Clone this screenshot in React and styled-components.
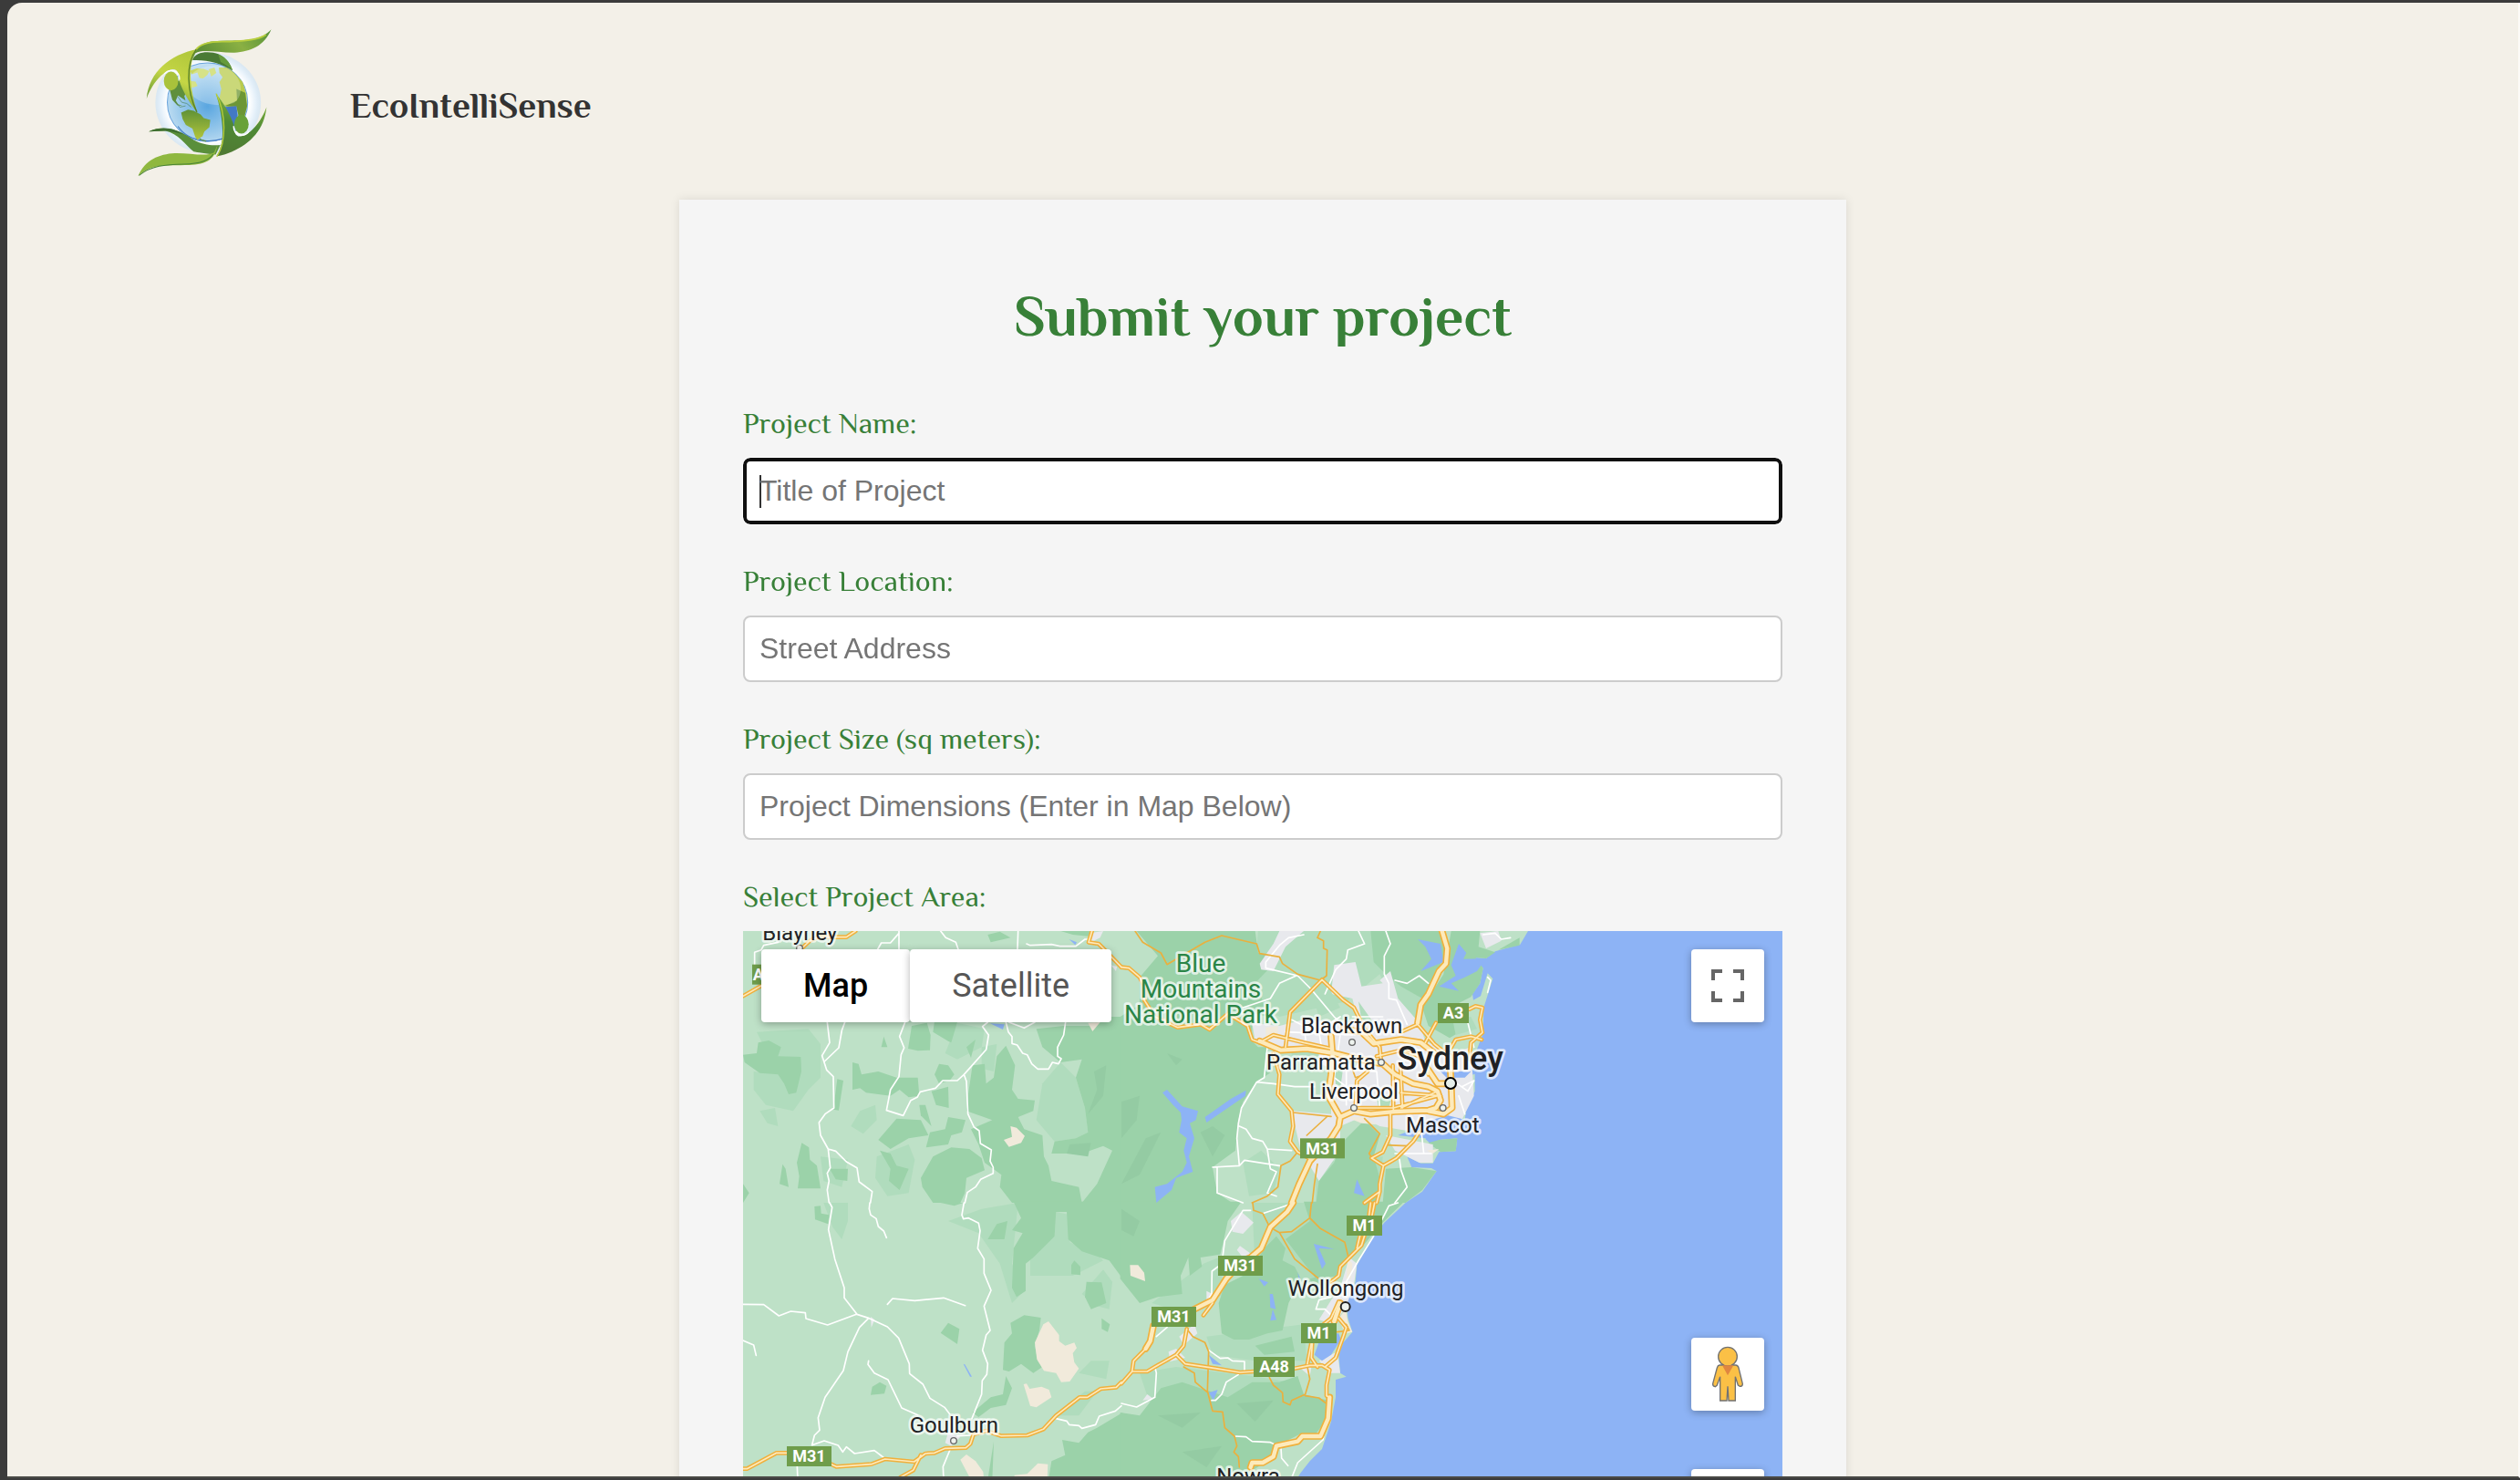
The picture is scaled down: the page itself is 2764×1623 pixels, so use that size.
import React from "react"
import styled, { createGlobalStyle } from "styled-components"
import { Plus, Minus } from "lucide-react"

const GlobalStyle = createGlobalStyle`
  * {
    box-sizing: border-box;
  }
  body {
    margin: 0;
    background: #3b3b3b;
    font-family: Philosopher, "Liberation Serif", serif;
  }
`

const Frame = styled.div`
  display: flex;
  height: 100vh;
  padding: 3px 0 2px 8px;
  background: #3b3b3b;
`

const Page = styled.div`
  flex: 1;
  overflow: hidden;
  background: #f3f0e8;
  border-right: 2px solid #fcfbf7;
  border-bottom: 2px solid #4a4a46;
  border-top-left-radius: 16px;
`

const Header = styled.header`
  display: flex;
  align-items: center;
  gap: 82px;
  padding: 27px 139px 22px;

  svg {
    display: block;
    width: 155px;
    height: 167px;
  }
`

const Brand = styled.div`
  padding-top: 4px;
  color: #333;
  font-size: 39px;
  font-weight: 700;
  line-height: 48px;
`

const Card = styled.main`
  max-width: 1280px;
  margin: 0 auto;
  padding: 88px 70px 70px;
  background: #f5f5f5;
  box-shadow: 0 0 10px rgba(0, 0, 0, 0.1);
`

const Title = styled.h1`
  margin: 0 0 57px;
  color: #388038;
  font-size: 62px;
  line-height: 80px;
  text-align: center;
`

const Form = styled.form`
  display: flex;
  flex-direction: column;
  gap: 42px;
`

const Field = styled.div`
  display: flex;
  flex-direction: column;
  gap: 18px;
`

const Label = styled.label`
  color: #388038;
  font-size: 32px;
  line-height: 40px;
`

const Input = styled.input`
  width: 100%;
  height: 73px;
  padding: 0 16px;
  border: 2px solid #ccc;
  border-radius: 8px;
  background: #fff;
  color: #111;
  font-family: Arial, "Liberation Sans", sans-serif;
  font-size: 32px;

  &::placeholder {
    color: #757575;
    opacity: 1;
  }

  &:focus {
    padding: 0 14px;
    border: 4px solid #101010;
    outline: 1px solid #fff;
    caret-color: transparent;
  }

  /* steady caret while the field is still empty */
  &:focus:placeholder-shown {
    background: linear-gradient(#333, #333) 14px center / 2px 36px no-repeat #fff;
  }
`

const MapBox = styled.div`
  position: relative;
  height: 800px;
  overflow: hidden;
  background: #8db3f5;
  font-family: Roboto, sans-serif;
`

const MapCanvas = styled.svg`
  display: block;
  width: 100%;
  height: 100%;

  .line {
    fill: none;
    stroke-linejoin: round;
    stroke-linecap: round;
  }
`

const MapTypes = styled.div`
  position: absolute;
  top: 20px;
  left: 20px;
  display: flex;
`

const MapButton = styled.button`
  height: 80px;
  padding: ${(props) => (props.$icon ? "0" : "0 46px")};
  width: ${(props) => (props.$icon ? "80px" : "auto")};
  border: 0;
  border-radius: 4px;
  background: #fff;
  box-shadow: 0 2px 8px rgba(0, 0, 0, 0.3);
  color: ${(props) => (props.$active ? "#000" : "#565656")};
  font-family: Roboto, sans-serif;
  font-size: 36px;
  font-weight: ${(props) => (props.$active ? 500 : 400)};

  svg {
    display: block;
    margin: 0 auto;
  }
`

const TopRight = styled.div`
  position: absolute;
  top: 20px;
  right: 20px;
`

const BottomRight = styled.div`
  position: absolute;
  right: 20px;
  bottom: 48px;
  display: flex;
  flex-direction: column;
  gap: 64px;
`

const ZoomButtons = styled.div`
  display: flex;
  flex-direction: column;
  gap: 2px;
`

const figure =
  "M250,132 C165,150 98,205 90,294 C108,245 140,205 172,198 C190,196 194,215 194,235 C205,270 228,310 252,340 C236,290 222,215 236,165 C240,148 246,138 250,132Z"
const ribbon =
  "M235,168 C240,125 268,105 325,104 C400,102 450,108 487,67 C465,122 420,140 370,143 C320,144 270,130 245,145Z"

const Logo = () => (
  <svg viewBox="50 60 450 500" preserveAspectRatio="none" role="img" aria-label="EcoIntelliSense logo">
    <defs>
      <radialGradient id="halo">
        <stop offset="0.78" stopColor="#fff" />
        <stop offset="0.9" stopColor="#e6f1fa" />
        <stop offset="1" stopColor="#cfe4f6" stopOpacity="0.7" />
      </radialGradient>
      <radialGradient id="sea" cx="0.5" cy="0.55" r="0.55">
        <stop offset="0" stopColor="#5aa6e0" />
        <stop offset="0.55" stopColor="#93c6ea" />
        <stop offset="1" stopColor="#c6e1f3" />
      </radialGradient>
      <linearGradient id="lime" x1="0.6" y1="0" x2="0.2" y2="1">
        <stop offset="0" stopColor="#b3c93c" />
        <stop offset="0.4" stopColor="#c5d645" />
        <stop offset="1" stopColor="#4f8a32" />
      </linearGradient>
      <linearGradient id="leaf" x1="0" y1="0.3" x2="1" y2="0">
        <stop offset="0" stopColor="#5e8f35" />
        <stop offset="0.5" stopColor="#8ab043" />
        <stop offset="1" stopColor="#55913a" />
      </linearGradient>
      <linearGradient id="moss" x1="0.6" y1="0" x2="0.4" y2="1">
        <stop offset="0" stopColor="#4f7a33" />
        <stop offset="0.5" stopColor="#4f8a35" />
        <stop offset="1" stopColor="#8ebb3f" />
      </linearGradient>
      <linearGradient id="land" x1="0" y1="0" x2="0" y2="1">
        <stop offset="0" stopColor="#5f9136" />
        <stop offset="1" stopColor="#b4c63b" />
      </linearGradient>
    </defs>
    <ellipse cx="286" cy="308" rx="168" ry="166" fill="url(#halo)" />
    <ellipse cx="284" cy="306" rx="128" ry="129" fill="url(#sea)" stroke="#6aa4dc" strokeWidth="3" />
    <path d="M190,385 C225,440 320,450 372,400" fill="none" stroke="#3f78c2" strokeWidth="3" />
    <path d="M163,262 L190,235 213,240 222,268 210,285 214,300 202,292 190,284 183,300 190,312 205,318 188,316 172,298Z" fill="#5f8f3c" />
    <path d="M190,288 L202,306 218,310 232,322 M180,302 L196,322 214,318" fill="none" stroke="#4f8560" strokeWidth="2" />
    <path d="M200,340 L222,330 240,334 262,346 272,358 293,364 290,388 274,402 268,418 258,424 252,430 245,420 236,392 215,380 205,362Z" fill="url(#land)" />
    <path d="M258,424 L266,430 280,434" fill="none" stroke="#5d9040" strokeWidth="3" />
    <path d="M228,202 L250,195 272,196 290,204 284,216 270,228 258,226 252,208 234,214Z M230,236 L246,238 252,252 236,258 228,250Z M288,198 L306,192 312,210 296,222Z" fill="#c9d860" />
    <path d="M320,192 L345,192 368,208 396,240 408,280 410,318 402,352 384,356 376,320 350,322 330,312 322,292 328,262 322,240 332,224 322,210Z" fill="#b9cb4d" />
    <path d="M376,262 L404,275 410,318 402,352 384,356 376,320 340,318 378,300Z" fill="#6c9635" />
    <path d="M334,322 L376,318 380,350 372,380 366,404 350,398 342,360Z" fill="#4379c4" />
    <path d="M222,230 C240,190 300,175 345,195 C400,222 400,285 368,308 C320,325 250,312 226,272Z" fill="#fff" opacity="0.25" />
    <path d="M236,168 C245,138 290,137 320,148 C346,160 358,182 364,202 C330,178 280,165 236,168Z" fill="#4a7a35" />
    <path d="M318,148 C345,158 358,182 364,202 C350,188 338,180 326,174Z" fill="#659b3c" />
    <path d={ribbon} fill="url(#leaf)" />
    <path d="M246,135 C262,110 300,106 340,107 C400,106 446,102 470,84" fill="none" stroke="#b8ce3e" strokeWidth="5" />
    <path d={figure} fill="url(#lime)" />
    <path d="M248,132 C214,180 218,270 250,338" fill="none" stroke="#587f2b" strokeWidth="4" />
    <path d="M146,214 C160,194 195,198 195,232" fill="none" stroke="#fff" strokeWidth="4" />
    <ellipse cx="168" cy="236" rx="23" ry="31" fill="#a9c23b" />
    <path d="M97,402 C150,378 200,400 240,430 C265,445 300,450 325,446 L310,478 C280,475 250,470 240,468 C215,448 190,408 150,400Z" fill="#5a8f3b" />
    <path d="M97,402 C140,382 180,392 210,412 C185,405 160,400 145,400Z" fill="#3f6f31" />
    <g transform="rotate(180 275 308)">
      <path d={ribbon} fill="#8fb83f" />
      <path d="M248,140 C262,116 300,108 340,107 C400,106 446,102 484,70" fill="none" stroke="#4a8436" strokeWidth="3" />
    </g>
    <g transform="rotate(180 281 308)">
      <path d={figure} fill="url(#moss)" />
      <path d="M248,132 C218,180 218,270 250,338" fill="none" stroke="#b8ce3e" strokeWidth="4" />
      <path d="M146,214 C160,194 195,198 195,232" fill="none" stroke="#fff" strokeWidth="4" />
      <ellipse cx="170" cy="238" rx="23" ry="31" fill="#68a138" />
    </g>
  </svg>
)

// Coast outline, drawn in the frame of the Sydney tile.
const coast =
  "-1245,18 1338,18 1312,62 1230,85 1200,108 1160,105 1190,140 1180,190 1155,225 1158,245 1182,232 1205,157 1222,175 1192,270 1190,355 1165,420 1130,432 1140,470 1090,492 1120,502 1163,488 1163,545 1135,600 1130,640 1080,680 1010,688 1000,702 1030,730 1045,705 1105,700 1100,742 1045,745 1025,782 985,782 940,760 955,795 1020,798 1037,808 990,875 935,912 865,977 830,1022 775,1117 770,1172 742,1240 745,1290 760,1337 730,1372 715,1412 720,1472 740,1484 705,1494 705,1552 690,1632 660,1722 620,1762 590,1800 575,1824 500,2000 450,2700 -1245,2700"

// The map is kept as four tiles, each with its own origin.
const tiles = [
  {
    x: -15,
    y: -18,
    light: [
      "60,350 230,340 270,390 270,500 230,540 180,610 90,590 50,540 50,480 130,490",
      "370,660 400,610 450,590 455,640 410,685",
      "680,420 720,320 810,340 800,400 720,440",
      "270,760 360,770 340,860 280,840",
      "455,760 560,720 580,770 560,880 490,890 450,830",
      "800,400 850,390 840,480 800,470",
      "1000,520 1060,450 1110,500 1140,600 1150,680 1110,700 1040,710 980,640",
      "70,610 120,600 130,660 95,650",
    ],
    forest: [
      "15,425 60,420 65,385 100,378 140,400 130,430 205,432 207,480 190,550 165,555 150,520 130,490 70,485 20,450",
      "325,505 345,510 330,608 312,605",
      "375,450 395,455 405,490 460,480 520,500 590,500 595,560 560,565 530,540 500,560 420,550 400,535 375,540",
      "470,400 478,365 490,400",
      "558,405 570,330 620,320 632,360 630,410 590,412",
      "645,315 720,318 700,385 690,380 640,350",
      "750,400 780,375 765,435",
      "645,490 660,455 690,460 710,490 695,510 660,520",
      "635,545 690,530 692,600 650,590",
      "595,590 615,590 635,660 600,625",
      "460,705 520,635 600,640 625,690 560,700 500,735",
      "617,730 630,680 680,670 690,630 747,640 735,680 700,690 690,720",
      "600,830 640,760 700,730 760,735 800,765 810,805 750,830 745,880 730,912 640,912 605,860",
      "465,740 500,750 520,790 560,800 530,870 495,840 500,800",
      "192,780 208,715 232,730 235,770 258,790 270,865 195,865 200,825",
      "300,800 360,800 358,840 320,835",
      "145,785 155,800 165,860 135,850",
      "15,850 35,880 15,912",
      "770,460 810,455 815,520 840,500 850,430 880,395 910,460 900,540 920,570 975,575 970,610 920,630 940,670 1000,690 1005,760 1020,790 1030,840 1120,860 1130,912 900,912 860,860 865,820 810,780 790,720 765,670 835,640 750,610 755,560",
      "980,340 1070,330 1160,330 1200,300 1264,300 1264,912 1130,912 1180,850 1230,740 1200,725 1130,750 1030,750 1040,710 1110,700 1150,680 1140,600 1110,500 1130,440 1060,450 1000,400",
      "1060,18 1160,18 1150,35 1100,30",
      "820,30 860,20 895,40 830,55",
    ],
    shade: [
      "1170,480 1210,460 1200,560 1150,620 1180,540",
      "1090,720 1160,715 1150,760 1080,750",
    ],
    urban: ["1155,25 1200,18 1190,40 1160,55", "1225,130 1245,135 1242,150"],
    sand: ["873,705 900,695 895,660 915,665 942,692 930,715 890,728", "1150,320 1190,318 1165,348"],
    water: ["828,322 875,325 870,342", "1088,45 1113,55 1108,64"],
    white:
      "M292,318 300,385 275,428 290,475 312,497 314,600 285,620 265,648 270,690 295,735 302,797 292,815 298,840 292,870 298,912 M350,318 340,345 330,402 283,447 M295,735 320,742 355,777 390,797 397,843 440,875 434,912 M548,318 530,365 545,402 535,425 528,497 500,540 487,608 542,625 567,575 588,565 598,547 648,535 672,510 720,510 742,490 815,408 823,360 803,332 820,318 M742,490 750,512 755,620 775,663 792,675 796,717 832,738 828,775 838,795 838,815 797,835 780,860 753,878 745,912 M880,318 888,350 900,365 900,388 917,393 935,420 950,425 965,455 985,472 1020,472 1033,450 1053,455 1062,438 1050,430 1050,400 1070,360 1076,318 M890,318 940,337 975,318 M458,78 470,57 500,57 528,25 M528,18 528,78 M665,18 682,40 715,55 723,78 M920,18 918,78 M948,60 960,65 1030,62 1058,68 1110,68 1140,45 1150,45 M53,135 53,88 75,80 83,65 130,55",
    thin: "",
    medium: "M205,78 235,50 260,38 355,38 385,18 M15,232 75,198 M1163,18 1152,55 1185,60 1200,75 1260,137",
    wide: "",
  },
  {
    x: 1245,
    y: -18,
    light: [
      "450,18 820,18 850,160 740,250 520,300 440,260 440,120",
      "820,100 990,130 980,320 900,260",
      "640,780 860,760 850,912 640,912",
      "400,780 460,740 520,800 500,880 420,890",
    ],
    forest: [
      "50,18 440,18 450,90 520,105 440,190 450,270 430,300 430,380 450,400 480,400 495,480 440,520 400,580 385,640 375,740 300,795 315,880 370,916 -4,916 -4,300 60,260 60,170 120,100",
      "820,18 1050,18 1070,80 1040,150 990,240 920,200 870,160 830,120",
      "1085,18 1180,18 1175,70 1230,88 1200,108 1165,105 1190,140 1180,190 1150,235 1100,260 1130,340 1080,370 1010,330 990,270 1060,160",
      "870,800 955,795 1037,808 990,870 935,912 860,912",
      "720,720 800,640 850,690 830,760 850,830 840,916 640,916 650,840 700,780",
      "1010,715 1045,705 1105,700 1100,742 1050,745",
      "720,170 735,135 755,150 745,190",
      "1240,80 1310,40 1310,65",
      "430,240 460,235 480,300 440,290",
    ],
    shade: [
      "0,580 60,560 50,640 0,700",
      "0,850 80,700 130,680 60,820",
      "260,680 300,660 340,690 300,760",
      "150,420 200,440 180,460",
    ],
    urban: [
      "455,125 500,60 520,18 600,18 540,70 500,150 460,145",
      "600,310 780,320 760,240 690,225 700,130 770,120 790,200 860,190 850,180 885,150 910,240 980,320 1000,380 1090,420 1150,400 1160,560 1120,640 1080,640 1030,690 850,660 790,630 720,660 720,740 650,840 590,740 560,610 690,620 690,470 530,400 440,380 430,320 520,330",
      "1180,25 1240,18 1250,50 1200,75",
      "560,610 690,625 660,700 600,720",
      "870,690 1025,720 1025,780 980,780 900,740",
    ],
    sand: ["475,335 515,330 515,375 475,370", "740,630 800,630 840,655 790,650", "1005,740 1045,735 1025,750"],
    park: [
      "620,200 680,200 720,270 650,300",
      "700,460 730,465 720,540 705,520",
      "560,410 650,420 650,470 560,480",
      "780,250 830,320 790,310",
      "1090,310 1150,300 1170,340 1100,360",
      "840,560 890,560 880,600 845,595",
      "740,430 780,450 760,480",
    ],
    water: [
      "135,550 150,540 200,595 252,610 245,640 225,650 240,700 222,760 235,810 180,830 165,870 115,912 110,860 150,850 200,810 215,780 205,740 215,700 190,680 198,640 195,615 170,590",
      "275,630 360,570 410,542 408,560 280,648",
      "975,45 1050,60 1060,120 985,150 1020,110 1000,70",
      "1110,60 1135,90 1125,110 1200,108 1170,150 1130,170 1085,190 1110,215 1045,200 1100,165 1085,130",
      "775,835 800,890 765,880",
      "1075,625 1135,640 1090,680 1000,700 910,690 950,675 980,650",
      "1030,460 1070,480 1150,480 1130,500 1070,500",
    ],
    white:
      "M600,30 550,40 520,65 475,120 475,140 580,165 625,210 700,300 730,330 M780,18 800,60 745,80 740,110 705,145 670,225 M870,18 885,60 865,100 865,160 880,190 880,240 905,245 940,325 M445,515 500,520 570,530 635,530 M480,400 470,500 445,515 395,600 385,650 380,700 388,790 300,795 315,795 315,880 400,912 M388,660 410,670 430,700 465,710 480,735 560,740 M388,790 405,772 520,790 M480,735 490,800 510,810 480,880 510,890 M540,350 760,360 M600,330 610,400 M650,350 660,410 M560,310 640,350 720,300 M740,430 740,590 M700,500 780,560 M700,560 790,540 M700,470 840,480 M720,360 700,500 M760,300 860,300 M840,480 850,600 M915,770 920,805 940,860 900,912 M900,180 940,190 980,165 1010,190 M1140,320 1160,400 M1105,520 1140,545 1160,510 1120,530 M900,750 1020,750 M985,660 995,750 M575,165 520,190 490,240 400,270 M1190,30 1230,25 1250,45 1280,40 M1205,170 1215,180 1205,220 M1110,560 1130,620",
    thin:
      "M45,18 70,55 130,90 150,128 275,55 330,33 445,60 455,92 520,103 530,125 580,160 655,180 M655,18 645,40 665,50 665,75 677,80 675,165 655,180 M565,615 690,628 M675,630 610,690 M580,745 555,775 525,790 515,860 480,890 430,912 M645,785 635,850 628,912 M800,635 850,685 815,750 825,765 M870,722 945,725 M750,445 770,500 800,490",
    medium:
      "M0,137 25,140 60,170 75,200 75,245 110,300 185,335 260,325 290,342 350,290 415,330 430,375 455,385 500,360 600,385 690,405 M540,400 555,285 660,178 730,245 765,270 800,340 850,400 855,450 M500,420 520,490 515,555 560,610 565,660 555,710 580,745 625,770 M1145,275 1165,265 1188,270 1180,310 1188,352 1150,385 1145,440 M1080,410 1100,375 1150,365 1185,375 M1000,385 1035,320 M975,325 1030,390 1080,430 M885,620 885,690 860,745 823,765 862,790 850,850 850,875 800,912 M850,875 840,912 M862,790 905,765 960,710 980,680 M893,460 895,610 M918,460 925,600 M770,600 775,510 810,480 M780,600 895,600 1040,560 M920,600 1040,545 M920,550 1050,560 M840,430 920,410 980,430 1010,490 M975,325 920,350",
    wide:
      "M455,380 525,410 610,405 700,420 780,440 860,455 900,490 960,520 1010,530 1040,545 1050,575 1035,600 1010,608 900,612 820,620 765,610 720,630 715,660 690,700 620,775 585,850 560,912 M690,365 695,430 690,490 680,560 720,630 M1055,18 1072,75 1068,125 1045,150 1010,225 985,260 975,320 M730,340 790,350 830,388 920,375 985,385 1030,420 M1000,460 1040,520 1080,520 M1080,430 1085,520 1088,600 1060,620 1010,610",
  },
  {
    x: -15,
    y: 894,
    light: [
      "280,0 360,0 360,60 340,120 310,80",
      "690,60 800,20 920,0 900,200 940,290 900,330 860,200 790,100",
      "960,160 1040,110 1045,30 1090,40 1090,130 1180,170 1200,190 1100,240 960,240",
      "1130,300 1200,220 1230,260 1220,350 1180,340",
      "1040,700 1140,620 1180,620 1120,700",
      "1120,560 1160,520 1220,520 1210,580",
    ],
    forest: [
      "250,12 270,10 272,35 298,40 295,70 252,55",
      "665,428 690,395 727,415 720,465",
      "435,632 440,605 465,590 487,602 480,628",
      "870,550 875,460 900,430 895,395 940,370 995,378 990,420 975,470 985,520 1000,540 970,560 930,530 890,555",
      "880,570 900,610 880,665 830,675 790,705 770,690 830,640 870,630",
      "905,-4 1264,-4 1264,250 1220,190 1130,160 1085,120 1080,30 1045,30 1040,110 970,180 945,200 945,290 915,310 900,280 905,150 935,100 900,90 930,50",
      "1145,260 1195,262 1210,330 1160,350 1140,310",
      "1195,380 1222,400 1215,425 1195,415",
      "1065,780 1120,790 1150,755 1180,740 1264,690 1264,912 1020,912 1030,850 1075,830",
      "820,912 840,785 835,912",
      "820,120 850,70 885,60 875,120",
      "1095,205 1105,190 1125,210 1125,238 1095,235",
      "665,0 740,0 710,10",
    ],
    shade: [],
    urban: ["435,375 448,385 437,410", "680,790 690,755 730,770 700,800"],
    sand: [
      "975,460 1003,400 1020,390 1055,435 1055,455 1075,470 1105,460 1113,478 1100,495 1105,525 1120,545 1090,588 1062,590 1045,560 1005,553 982,515",
      "938,597 948,595 958,612 997,605 1022,615 1030,640 980,673 960,668",
      "730,845 750,828 780,850 805,885 808,912 765,912",
      "908,896 950,892 985,857 1018,860 1016,912 908,912",
    ],
    water: ["740,530 745,532 768,572 762,572"],
    white:
      "M300,0 308,15 296,88 317,185 348,280 348,313 390,367 430,380 490,408 527,445 562,530 563,562 607,597 630,643 678,673 695,695 M432,0 430,20 435,40 453,52 460,78 478,93 487,115 M742,0 735,40 740,53 757,50 790,67 795,92 787,150 808,185 808,232 831,288 808,340 828,420 815,435 803,485 820,530 817,565 802,585 800,630 768,710 M490,334 507,315 580,322 675,313 746,338 M15,334 83,335 133,372 172,357 220,362 222,381 293,402 388,367 M428,380 398,410 360,490 345,552 285,640 262,707 267,748 250,765 242,797 282,783 328,798 343,820 355,803 382,825 447,815 480,840 M15,453 50,468 58,502 M428,520 426,532 447,560 492,582 537,675 590,698 M193,867 195,912 M697,810 673,868 675,912 M720,767 765,765 M1045,710 1080,718 1088,730 1120,733 1130,742 1175,730 1187,702 1240,685 1260,668",
    thin: "",
    medium:
      "M15,875 28,875 125,823 160,823 M305,860 322,868 437,860 482,843 578,852 615,825 645,823 680,808 748,806 763,793 773,762 815,750 850,762 865,767 950,765 1003,745 1045,700 1122,640 1148,640 1192,612 1243,607 1260,590 M533,903 575,880 600,830",
    wide: "",
  },
  {
    x: 1245,
    y: 894,
    light: [
      "430,0 620,0 720,130 640,250 540,300 440,220",
      "270,200 320,180 340,300 200,360 100,330",
      "280,440 600,400 610,520 440,520 300,500",
      "60,560 180,540 430,570 560,590 600,640 100,680",
    ],
    forest: [
      "-4,-4 395,-4 350,60 335,130 325,170 260,180 265,210 225,240 220,180 195,240 200,300 120,310 60,330 -4,250",
      "340,270 400,240 440,200 470,150 510,110 540,150 530,190 570,210 590,250 550,330 530,420 480,430 420,450 370,450 330,430 320,330",
      "600,-4 930,-4 860,65 830,100 770,170 730,200 720,240 640,250 540,120 620,60",
      "-4,690 60,700 130,610 200,590 350,640 430,590 520,590 580,570 600,630 680,650 670,720 640,760 590,760 510,800 480,850 400,900 400,912 -4,912",
      "620,250 660,240 680,280 640,300",
      "440,470 560,440 570,490 470,500",
    ],
    shade: ["120,700 260,690 200,740", "200,820 330,800 280,870", "380,660 500,650 440,720", "0,20 60,60 40,110 0,90"],
    urban: [
      "360,60 395,30 435,65 400,102 365,95",
      "380,155 390,142 430,170 400,180",
      "190,440 240,400 250,430 205,468",
      "690,320 720,280 750,180 775,200 765,270 740,340 700,400 650,385",
      "650,520 710,490 720,560 690,560",
      "155,490 180,480 210,510 160,522",
      "590,545 625,540 620,570",
      "70,650 85,630 105,645",
      "280,290 300,300 300,320 280,320",
    ],
    sand: ["28,205 55,205 75,230 78,258 30,240", "738,350 745,390 760,425 735,430 715,380", "745,180 760,200 755,250 740,250"],
    water: [
      "633,135 700,152 650,150 672,200 660,218",
      "452,250 483,262 470,275",
      "488,300 498,300 508,350 490,345",
      "498,350 510,385 490,388",
      "635,500 660,430 715,430 722,450 690,500 660,520",
      "287,500 330,535 300,530",
      "288,625 317,615 303,650",
      "580,228 590,255 583,250",
    ],
    white:
      "M425,25 400,25 340,125 333,180 M318,210 298,225 297,300 285,320 M570,0 465,35 M287,485 325,512 350,510 365,520 405,522 405,555 M385,565 345,590 330,630 310,650 297,650 M110,540 115,560 110,640 50,672 0,660 M375,768 410,770 430,785 490,788 525,805 527,840 548,865 M665,770 663,780 580,855 562,900 M830,110 780,190 740,260 740,310 M910,0 880,10 865,40 855,60 M690,310 650,320 640,350 670,350 690,370 M150,410 115,440",
    thin:
      "M432,0 435,25 465,35 488,80 520,98 560,95 620,50 655,85 735,130 747,180 M625,0 620,50 M520,98 570,185 650,250 M215,415 235,440 275,460 287,490 283,620 300,685 333,688 340,740 372,768 380,800 370,820 385,835 388,870 M205,540 240,560 243,590 285,625 M487,575 500,600 530,625 532,655 555,665 560,650 605,630 620,580 612,540 M605,635 650,642 680,665 M710,425 750,420 740,400",
    medium:
      "M820,0 815,40 M833,0 825,40 M800,108 790,140 720,210 715,240 690,260 M785,108 775,150 M715,325 690,380 665,400 M625,460 612,530 M628,460 625,510 645,540 M35,555 85,555 110,540 180,500 210,530 310,545 390,558 435,555 M570,545 620,535 M215,415 205,470 180,500 M300,330 270,370 M715,380 740,410 730,440 705,510 670,540 M80,480 40,520 35,555 0,595 M685,640 675,635 675,600 685,550 660,535 620,535",
    wide:
      "M565,0 545,30 490,80 460,150 425,180 400,190 345,250 300,320 230,355 M105,405 95,455 80,480 M720,330 700,390 M425,870 430,855 465,855 500,835 510,800 580,785 595,768 655,768 680,710 685,640",
  },
]

const areas = [
  ["light", "#b0dcbd"],
  ["forest", "#9bd2a9"],
  ["shade", "#94cba3"],
  ["urban", "#e8e9ed"],
  ["park", "#b0dcbd"],
  ["sand", "#f1eadb"],
  ["water", "#8db3f5"],
]

const roads = [
  ["white", "#fff", 5],
  ["thin", "#eab03e", 5],
  ["medium", "#f0b03c", 14],
  ["wide", "#f0b03c", 23],
  ["medium", "#fdeabb", 5],
  ["wide", "#fdeabb", 13],
]

const shields = [
  { x: 30, y: 110, w: 102, text: "A32" },
  { x: 2286, y: 237, w: 102, text: "A3" },
  { x: 1833, y: 682, w: 147, text: "M31" },
  { x: 1563, y: 1068, w: 147, text: "M31" },
  { x: 1344, y: 1236, w: 147, text: "M31" },
  { x: 1986, y: 936, w: 117, text: "M1" },
  { x: 1836, y: 1290, w: 117, text: "M1" },
  { x: 1680, y: 1401, w: 135, text: "A48" },
  { x: 144, y: 1695, w: 147, text: "M31" },
]

const towns = [
  { name: "Blayney", x: 187, y: 30, cx: 186, cy: 56 },
  { name: "Blacktown", x: 2003, y: 337, cx: 2004, cy: 366 },
  { name: "Parramatta", x: 1902, y: 457, cx: 2100, cy: 432 },
  { name: "Liverpool", x: 2010, y: 553, cx: 2010, cy: 582 },
  { name: "Mascot", x: 2302, y: 662, cx: 2303, cy: 582 },
  { name: "Wollongong", x: 1983, y: 1201, cx: 1982, cy: 1236, big: true },
  { name: "Goulburn", x: 694, y: 1649, cx: 693, cy: 1677 },
  { name: "Nowra", x: 1662, y: 1817, cx: 1662, cy: 1850 },
]

const park = [
  ["Blue", 135],
  ["Mountains", 219],
  ["National Park", 303],
]

const AreaMap = () => (
  <MapCanvas viewBox="0 0 3420 2400" preserveAspectRatio="xMinYMin slice" role="img" aria-label="Map of Sydney">
    <rect width="3420" height="2400" fill="#8db3f5" />
    <polygon points={coast} transform="translate(1245 -18)" fill="#bee1c7" />
    {areas.map(([kind, fill]) =>
      tiles.map((tile, i) => (
        <g key={kind + i} transform={`translate(${tile.x} ${tile.y})`} fill={fill}>
          {(tile[kind] || []).map((points) => (
            <polygon key={points} points={points} />
          ))}
        </g>
      ))
    )}
    {roads.map(([kind, stroke, width]) =>
      tiles.map((tile, i) =>
        tile[kind] ? (
          <path
            key={kind + width + i}
            className="line"
            d={tile[kind]}
            transform={`translate(${tile.x} ${tile.y})`}
            stroke={stroke}
            strokeWidth={width}
          />
        ) : null
      )
    )}
    {shields.map((s) => (
      <g key={`${s.x}-${s.y}`}>
        <rect x={s.x} y={s.y} width={s.w} height="66" fill="#6f9d4b" />
        <text x={s.x + s.w / 2} y={s.y + 52} fill="#fff" fontSize="54" fontWeight="700" textAnchor="middle">
          {s.text}
        </text>
      </g>
    ))}
    {towns.map((t) => (
      <g key={t.name}>
        <circle
          cx={t.cx}
          cy={t.cy}
          r={t.big ? 15 : 10}
          fill="#eef3ee"
          stroke={t.big ? "#222" : "#666"}
          strokeWidth={t.big ? 6 : 4}
        />
        <text
          x={t.x}
          y={t.y}
          fill="#202124"
          stroke="#fff"
          strokeOpacity="0.7"
          strokeWidth="16"
          strokeLinejoin="round"
          paintOrder="stroke"
          fontSize="72"
          textAnchor="middle"
        >
          {t.name}
        </text>
      </g>
    ))}
    <circle cx="2328" cy="501" r="18" fill="#e6efea" stroke="#000" strokeWidth="6" />
    <text
      x="2327"
      y="457"
      fill="#202124"
      stroke="#fff"
      strokeOpacity="0.7"
      strokeWidth="16"
      strokeLinejoin="round"
      paintOrder="stroke"
      fontSize="108"
      fontWeight="500"
      textAnchor="middle"
    >
      Sydney
    </text>
    <g
      fill="#2a8547"
      stroke="#fff"
      strokeOpacity="0.7"
      strokeWidth="16"
      strokeLinejoin="round"
      paintOrder="stroke"
      fontSize="84"
      textAnchor="middle"
    >
      {park.map(([line, y]) => (
        <text key={line} x="1506" y={y}>
          {line}
        </text>
      ))}
    </g>
  </MapCanvas>
)

const Pegman = () => (
  <svg width="36" height="62" viewBox="529 229 106 186">
    <g fill="#fbc046" stroke="#727272" strokeWidth="4">
      <path d="M555,292 L608,292 Q616,293 618,301 L631,354 Q631,362 622,362 L616,358 L607,330 L607,409 L585,409 L582,362 L579,409 L557,409 L557,330 L547,358 L541,363 Q532,361 533,353 L547,301 Q549,293 555,292Z" />
      <circle cx="582" cy="264" r="31" />
    </g>
    <path d="M564,293 L601,293 582,326Z" fill="#e08640" />
  </svg>
)

const Fullscreen = () => (
  <svg width="36" height="36" viewBox="0 0 36 36" fill="none" stroke="#666" strokeWidth="4">
    <path d="M2,12 V2 H12 M24,2 H34 V12 M34,24 V34 H24 M12,34 H2 V24" />
  </svg>
)

const fields = [
  { id: "name", label: "Project Name:", placeholder: "Title of Project", autoFocus: true },
  { id: "location", label: "Project Location:", placeholder: "Street Address" },
  { id: "size", label: "Project Size (sq meters):", placeholder: "Project Dimensions (Enter in Map Below)" },
]

const App = () => {
  return (
    <Frame>
      <GlobalStyle />
      <Page>
        <Header>
          <Logo />
          <Brand>EcoIntelliSense</Brand>
        </Header>
        <Card>
          <Title>Submit your project</Title>
          <Form>
            {fields.map((field) => (
              <Field key={field.id}>
                <Label htmlFor={field.id}>{field.label}</Label>
                <Input id={field.id} type="text" placeholder={field.placeholder} autoFocus={field.autoFocus} />
              </Field>
            ))}
            <Field>
              <Label as="div" id="area">
                Select Project Area:
              </Label>
              <MapBox role="group" aria-labelledby="area">
                <AreaMap />
                <MapTypes>
                  <MapButton type="button" $active>
                    Map
                  </MapButton>
                  <MapButton type="button">Satellite</MapButton>
                </MapTypes>
                <TopRight>
                  <MapButton type="button" $icon aria-label="Toggle fullscreen view">
                    <Fullscreen />
                  </MapButton>
                </TopRight>
                <BottomRight>
                  <MapButton type="button" $icon aria-label="Street View">
                    <Pegman />
                  </MapButton>
                  <ZoomButtons>
                    <MapButton type="button" $icon aria-label="Zoom in">
                      <Plus size={36} />
                    </MapButton>
                    <MapButton type="button" $icon aria-label="Zoom out">
                      <Minus size={36} />
                    </MapButton>
                  </ZoomButtons>
                </BottomRight>
              </MapBox>
            </Field>
          </Form>
        </Card>
      </Page>
    </Frame>
  )
}

export default App
